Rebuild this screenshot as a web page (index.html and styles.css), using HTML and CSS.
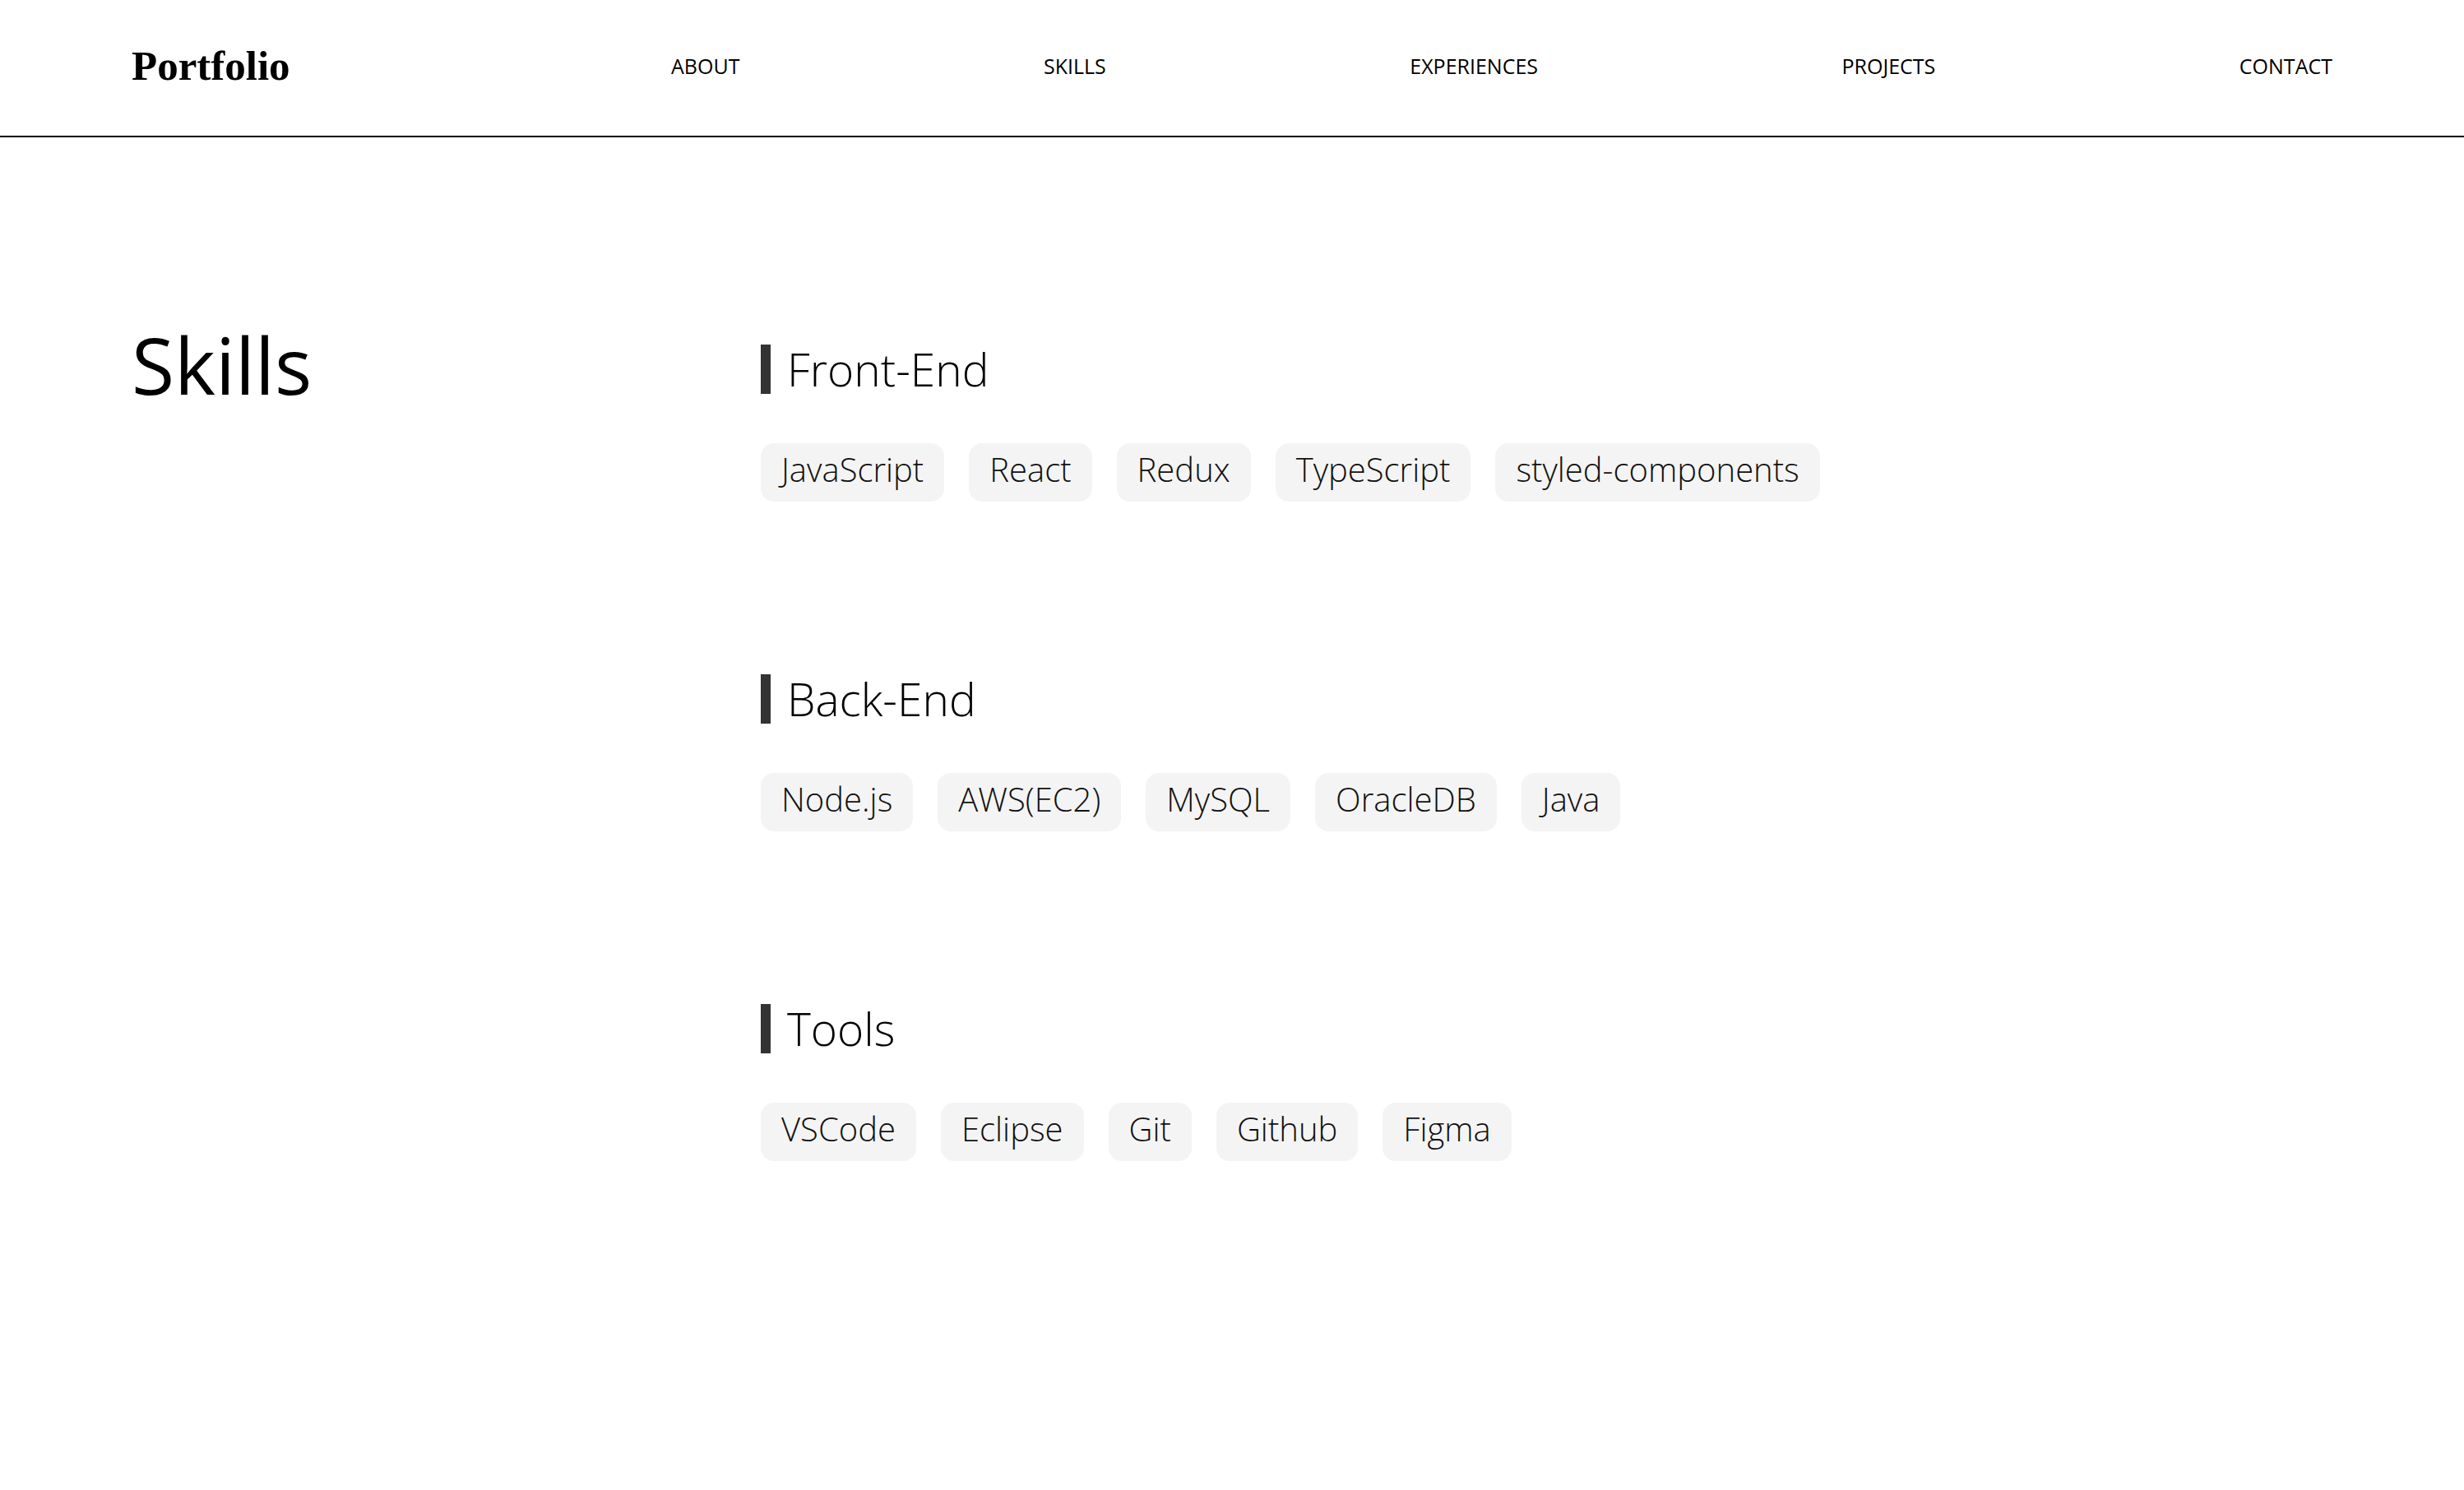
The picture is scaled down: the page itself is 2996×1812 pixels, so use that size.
FILE: index.html
```html
<!DOCTYPE html>
<html lang="ko">
<head>
<meta charset="utf-8">
<title>Portfolio</title>
<link rel="stylesheet" href="styles.css">
</head>
<body>
<header class="header">
  <a class="logo" href="#">Portfolio</a>
  <nav class="nav">
    <a class="nav-link" href="#about">ABOUT</a>
    <a class="nav-link" href="#skills">SKILLS</a>
    <a class="nav-link" href="#experiences">EXPERIENCES</a>
    <a class="nav-link" href="#projects">PROJECTS</a>
    <a class="nav-link" href="#contact">CONTACT</a>
  </nav>
</header>
<main class="skills" id="skills">
  <h2 class="skills-title">Skills</h2>
  <div class="skills-groups">
    <section class="group">
      <h3 class="group-title">Front-End</h3>
      <ul class="tags">
        <li class="tag">JavaScript</li>
        <li class="tag">React</li>
        <li class="tag">Redux</li>
        <li class="tag">TypeScript</li>
        <li class="tag">styled-components</li>
      </ul>
    </section>
    <section class="group">
      <h3 class="group-title">Back-End</h3>
      <ul class="tags">
        <li class="tag">Node.js</li>
        <li class="tag">AWS(EC2)</li>
        <li class="tag">MySQL</li>
        <li class="tag">OracleDB</li>
        <li class="tag">Java</li>
      </ul>
    </section>
    <section class="group">
      <h3 class="group-title">Tools</h3>
      <ul class="tags">
        <li class="tag">VSCode</li>
        <li class="tag">Eclipse</li>
        <li class="tag">Git</li>
        <li class="tag">Github</li>
        <li class="tag">Figma</li>
      </ul>
    </section>
  </div>
</main>
</body>
</html>
```

FILE: styles.css
```css
* {
  box-sizing: border-box;
}

html, body {
  margin: 0;
  padding: 0;
  background: #ffffff;
  color: #000000;
  font-family: "Open Sans", "Noto Sans", "Noto Sans CJK KR", sans-serif;
}

a {
  color: inherit;
  text-decoration: none;
}

.header {
  height: 167px;
  padding: 0 160px 5px 160px;
  border-bottom: 2px solid #000000;
  display: flex;
  align-items: center;
  justify-content: space-between;
}

.logo {
  font-family: "Liberation Serif", "Times New Roman", serif;
  font-weight: 700;
  font-size: 51px;
  line-height: 1;
  color: #000000;
}

.nav {
  width: 2020px;
  display: flex;
  justify-content: space-between;
  align-items: center;
}

.nav-link {
  font-size: 25px;
  font-weight: 400;
  color: #000000;
}

.skills {
  display: flex;
  align-items: flex-start;
  padding: 229px 160px 200px 160px;
}

.skills-title {
  width: 765px;
  flex: 0 0 765px;
  margin: 0;
  font-size: 95px;
  line-height: 1;
  font-weight: 400;
  color: #000000;
}

.skills-groups {
  flex: 1;
  padding-top: 23px;
  display: flex;
  flex-direction: column;
  gap: 210px;
}

.group {
  display: flex;
  flex-direction: column;
  gap: 60px;
}

.group-title {
  margin: 0;
  border-left: 12px solid #333333;
  padding-left: 20px;
  font-size: 55px;
  line-height: 60px;
  font-weight: 300;
  color: #000000;
}

.tags {
  list-style: none;
  margin: 0;
  padding: 0;
  display: flex;
  flex-wrap: wrap;
  gap: 30px;
}

.tag {
  background: #f4f4f4;
  border-radius: 16px;
  padding: 8px 25px 15px 25px;
  font-size: 40px;
  line-height: 48px;
  font-weight: 300;
  color: #111111;
}
```
